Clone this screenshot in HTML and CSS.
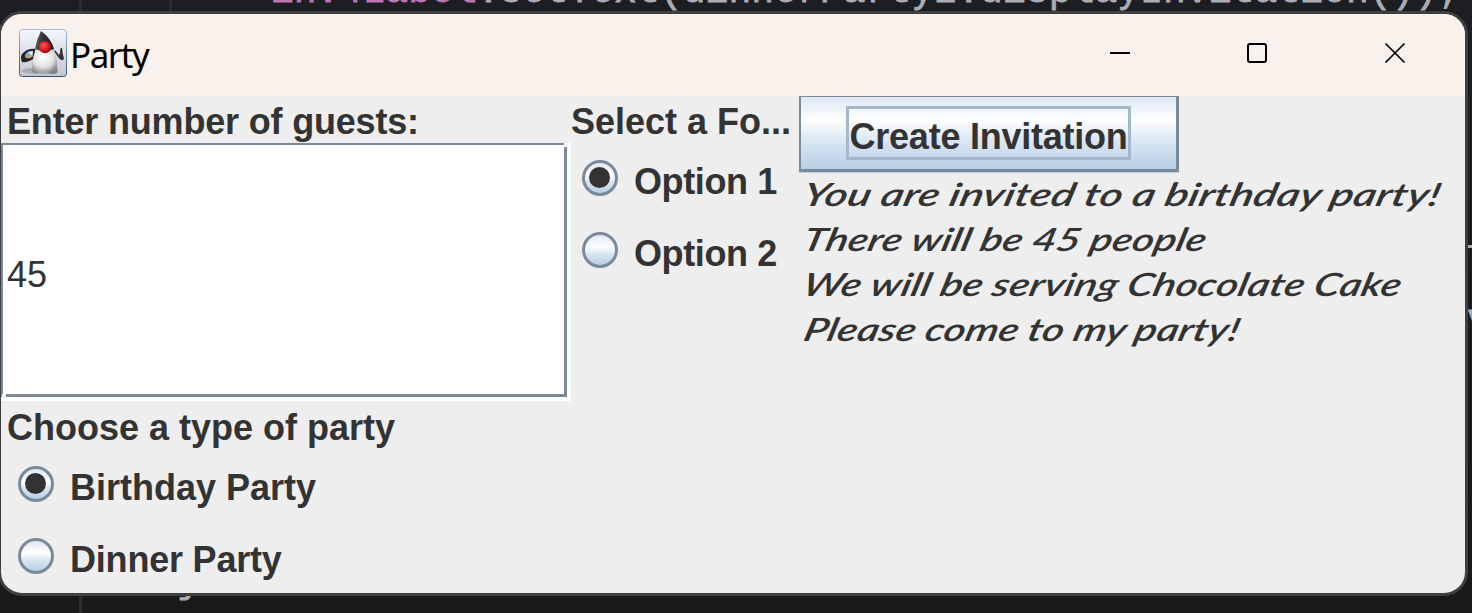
FILE: index.html
```html
<!DOCTYPE html>
<html lang="en">
<head>
<meta charset="utf-8">
<title>Party</title>
<link rel="stylesheet" href="styles.css">
</head>
<body>
<div class="editor">
  <div class="guide guide-a"></div>
  <div class="guide guide-b"></div>
  <div class="code code-top"><span class="field">inv4Label</span>.setText(dinnerParty2.displayInvitation());</div>
  <div class="code code-bottom">}</div>
  <div class="code code-dash"></div>
  <div class="code code-side">v</div>
</div>
<main class="window">
  <header class="titlebar">
    <svg class="duke" viewBox="0 0 48 48">
      <defs>
        <linearGradient id="tile" x2="0" y2="1"><stop stop-color="#f4f6fc"/><stop offset="1" stop-color="#c3c6d2"/></linearGradient>
        <linearGradient id="edge" x2="0" y2="1"><stop stop-color="#a6bdd4"/><stop offset="1" stop-color="#31566f"/></linearGradient>
        <radialGradient id="body" cx=".45" cy=".35" r=".65"><stop stop-color="#fff"/><stop offset=".6" stop-color="#e2e2e2"/><stop offset="1" stop-color="#858585"/></radialGradient>
        <linearGradient id="hat" x2="1" y2="0"><stop stop-color="#555"/><stop offset=".5" stop-color="#303030"/><stop offset="1" stop-color="#151515"/></linearGradient>
        <radialGradient id="nose" cx=".4" cy=".35" r=".65"><stop stop-color="#ff5548"/><stop offset=".6" stop-color="#e01d20"/><stop offset="1" stop-color="#94080c"/></radialGradient>
      </defs>
      <rect x=".5" y=".5" width="47" height="47" rx="3" fill="url(#tile)" stroke="url(#edge)"/>
      <path d="M2 42Q8 37 17 40L36 42Q39 45 27 45Q11 46 2 42Z" fill="#9c9ca5" opacity=".7"/>
      <path d="M17 20Q8 19 3 25Q1 28 3 33Q9 34 16 29Z" fill="#252525"/>
      <path d="M6 26Q9 21 14 22L14 27Q10 31 6 28Z" fill="#6ea9d8"/>
      <path d="M6 28Q10 31 14 27L13 24L9 27Z" fill="#c99d67"/>
      <path d="M9 24L14 22L13 26Z" fill="#e8f4fb"/>
      <path d="M35 22L39 28Q44 34 45 29L44 26L43 19Q41 18 41 24L40 26L36 21Z" fill="#343434"/>
      <path d="M17 19Q14 27 13 37Q11 44 17 44Q23 44 25 40Q30 46 36 45Q40 44 38 38Q38 27 34 19Z" fill="url(#body)"/>
      <path d="M22 2Q18 10 16 20Q24 24 35 20Q32 9 22 2Z" fill="url(#hat)"/>
      <circle cx="26" cy="18.3" r="6" fill="url(#nose)"/>
    </svg>
    <span class="title">Party</span>
    <svg class="controls" viewBox="0 0 296 22" fill="none" stroke="#000">
      <path d="M0 11H20" stroke-width="2"/>
      <rect x="138" y="2" width="18" height="18" rx="2" stroke-width="2"/>
      <path d="M275.500 1.500L294.500 20.500M294.500 1.500L275.500 20.500" stroke-width="1.700"/>
    </svg>
  </header>
  <div class="content">
    <section class="guests">
      <label class="label guests-label">Enter number of guests:</label>
      <div class="textbox"><div class="inset">45</div></div>
      <div class="label party-label">Choose a type of party</div>
      <div class="option"><i class="radio checked"></i><span>Birthday Party</span></div>
      <div class="option"><i class="radio"></i><span class="dinner">Dinner Party</span></div>
    </section>
    <section class="food">
      <div class="label">Select a Fo...</div>
      <div class="option"><i class="radio checked"></i><span>Option 1</span></div>
      <div class="option"><i class="radio"></i><span>Option 2</span></div>
    </section>
    <section class="result">
      <button class="create"><span>Create Invitation</span></button>
      <svg class="invitation" viewBox="0 0 660 184">
        <text transform="translate(2 34) skewX(-14)" textLength="637" lengthAdjust="spacingAndGlyphs">You are invited to a birthday party!</text>
        <text transform="translate(2 79) skewX(-14)" textLength="403" lengthAdjust="spacingAndGlyphs">There will be 45 people</text>
        <text transform="translate(2 124) skewX(-14)" textLength="598" lengthAdjust="spacingAndGlyphs">We will be serving Chocolate Cake</text>
        <text transform="translate(3 169) skewX(-14)" textLength="435" lengthAdjust="spacingAndGlyphs">Please come to my party!</text>
      </svg>
    </section>
  </div>
</main>
</body>
</html>
```
FILE: styles.css
```css
* { box-sizing: border-box; }
body {
  margin: 0;
  width: 1472px;
  height: 613px;
  overflow: hidden;
  position: relative;
  background: #1b1c1f;
  font-family: "Liberation Sans", Arial, sans-serif;
  color: #333;
}
.editor { position: absolute; inset: 0; overflow: hidden; background: linear-gradient(#1d1e21, #18191b); }
.guide { position: absolute; top: 0; width: 3px; background: #2b2c2f; }
.guide-a { left: 79px; height: 613px; }
.guide-b { left: 169px; height: 20px; }
.code {
  position: absolute;
  font: 38px/44px "Liberation Mono", "Courier New", monospace;
  color: #a9adb5;
  -webkit-text-stroke: 0.8px;
  white-space: pre;
}
.code-top { left: 271px; top: -30px; letter-spacing: 0.07px; }
.field { color: #bd75b3; }
.code-bottom { left: 177px; top: 560px; }
.code-dash { left: 1468px; top: 245px; width: 8px; height: 3px; background: #a9adb5; }
.code-side { left: 1467px; top: 299px; }
.window {
  position: absolute;
  left: -2px;
  top: 11px;
  width: 1470px;
  height: 585px;
  border: 3px solid #3f3f41;
  border-radius: 24px;
  background: #eee;
  overflow: hidden;
}
.titlebar {
  display: flex;
  align-items: flex-start;
  height: 82px;
  padding: 15px 59px 0 18px;
  background: #f9f1ec;
}
.duke { width: 48px; height: 48px; }
.title {
  margin-left: 3px;
  font: 35px/52px "Noto Sans", "Open Sans", sans-serif;
  letter-spacing: -1.5px;
  color: #000;
}
.controls { width: 296px; height: 22px; margin: 13px 0 0 auto; }
.content { display: grid; grid-template-columns: 570px 228px 1fr; align-items: start; }
.label { height: 47px; padding-left: 6px; font-size: 36px; font-weight: bold; line-height: 51px; white-space: nowrap; display: block; }
.guests-label { letter-spacing: -0.18px; }
.food .label { padding-left: 0; }
.textbox {
  position: relative;
  height: 258px;
  border: solid #fff;
  border-width: 0 4px 4px 0;
}
.textbox::before, .textbox::after {
  content: "";
  position: absolute;
  width: 4px;
  height: 4px;
  background: #f6f6f6;
}
.textbox::before { right: -1px; top: 0; }
.textbox::after { left: 1px; bottom: -1px; }
.inset {
  height: 254px;
  border: solid #7a8a99;
  border-width: 2px 3px 3px 2px;
  background: #fff;
  font-size: 36px;
  line-height: 259px;
  padding-left: 4px;
}
.party-label { height: 48px; line-height: 53px; }
.option {
  display: flex;
  align-items: flex-start;
  height: 72px;
  padding: 17px 0 0 17px;
  font-size: 36px;
  font-weight: bold;
  line-height: 43px;
  white-space: nowrap;
}
.dinner { letter-spacing: -0.2px; }
.food .option { padding-left: 11px; letter-spacing: -0.4px; }
.radio {
  width: 36px;
  height: 36px;
  margin-right: 16px;
  border: 3px solid #7a8a99;
  border-radius: 50%;
  background: linear-gradient(#dde8f3 0%, #fff 40%, #dbe7f2 62%, #b8cfe5 100%);
  padding: 4px;
}
.checked::after { content: ""; display: block; width: 21px; height: 21px; border-radius: 50%; background: #333; }
.create {
  display: flex;
  width: 380px;
  height: 76px;
  padding: 9px 0 0 45px;
  border: solid #7a8a99;
  border-width: 1px 3px 3px 2px;
  border-radius: 0;
  box-shadow: 0 1px #b8cfe5;
  background: linear-gradient(#dde8f3 0%, #fff 32%, #dbe7f2 60%, #b8cfe5 100%);
  color: #333;
  font: bold 36px/54px "Liberation Sans", Arial, sans-serif;
}
.create span {
  display: flex;
  justify-content: center;
  width: 285px;
  height: 54px;
  border: 3px solid #a3b8cc;
  line-height: 56px;
  letter-spacing: -0.25px;
  white-space: nowrap;
}
.invitation {
  display: block;
  width: 660px;
  height: 184px;
  font: italic 600 32px "Lucida Handwriting", Lato, cursive;
  fill: #333;
}
```
